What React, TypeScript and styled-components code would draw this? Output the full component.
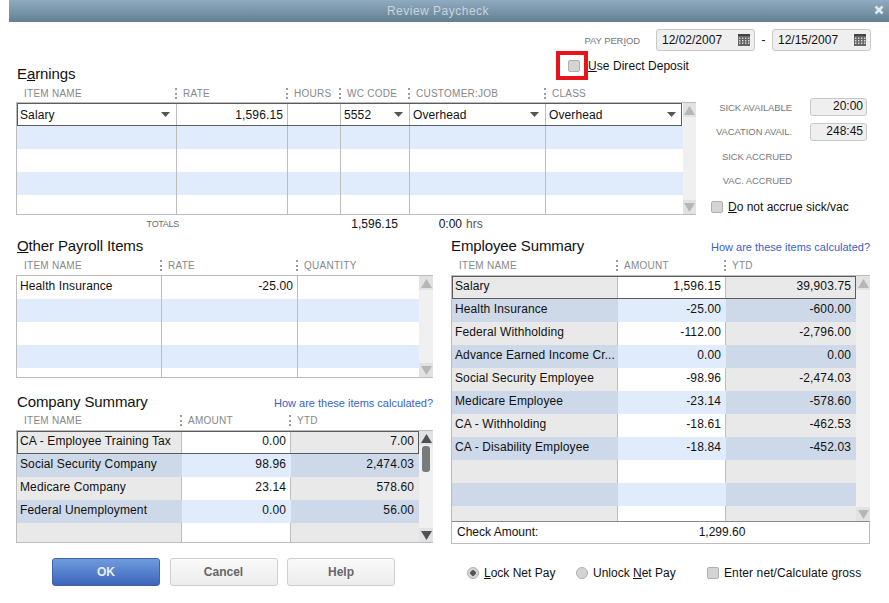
import React from "react";
import styled, { createGlobalStyle } from "styled-components";

const GlobalStyle = createGlobalStyle`
    html, body {
        margin: 0;
        padding: 0;
        background: #fff;
    }
    body {
        font-family: "Liberation Sans", Arial, sans-serif;
        font-size: 12px;
        color: #111;
    }
`;

type Align = "left" | "right";

interface Column {
    title: string;
    width: string;
    align?: Align;
    shaded?: boolean;
}

interface GridProps {
    columns: Column[];
    rows: string[][];
    activeRow?: number;
    height: number;
    dropdowns?: number[];
    thumb?: boolean;
    live?: boolean;
    lift?: boolean;
    footer?: React.ReactNode;
}

function template(columns: Column[]) {
    return columns.map((c) => c.width).join(" ");
}

function Arrow({ up, dark }: { up?: boolean; dark?: boolean }) {
    return (
        <svg width="11" height="9" viewBox="0 0 11 9">
            <path
                d={up ? "M5.5 0L11 9H0z" : "M0 0h11L5.5 9z"}
                fill={dark ? "#4c5256" : "#b4b6b8"}
            />
        </svg>
    );
}

function Caret() {
    return (
        <CaretIcon width="9" height="5" viewBox="0 0 9 5">
            <path d="M0 0h9L4.5 5z" fill="#555" />
        </CaretIcon>
    );
}

function Calendar() {
    return (
        <svg width="12" height="12" viewBox="0 0 12 12">
            <rect width="12" height="12" fill="#666" />
            <rect y="0" width="12" height="2" fill="#444" />
            {[1, 4, 7, 10].map((x) =>
                [3.5, 6, 8.5].map((y) => (
                    <rect
                        key={`${x}-${y}`}
                        x={x}
                        y={y}
                        width="1.4"
                        height="1.4"
                        fill="#ddd"
                    />
                ))
            )}
        </svg>
    );
}

function Grid({
    columns,
    rows,
    activeRow,
    height,
    dropdowns = [],
    thumb,
    live,
    lift,
    footer,
}: GridProps) {
    const tinted = columns.some((c) => c.shaded);

    return (
        <>
            <ColumnHeader $cols={template(columns)} $tall={lift}>
                {columns.map((c, i) => (
                    <HeaderCell key={c.title} $first={i === 0}>
                        {c.title}
                    </HeaderCell>
                ))}
            </ColumnHeader>
            <TableFrame>
                <TableBody $height={height}>
                    <Rows>
                        {rows.map((row, r) => (
                            <Row
                                key={r}
                                $cols={template(columns)}
                                $active={r === activeRow}
                            >
                                {columns.map((c, i) => (
                                    <Cell
                                        key={c.title}
                                        $align={c.align}
                                        $shaded={c.shaded}
                                        $stripe={r % 2 === 1}
                                        $noLine={
                                            i === columns.length - 1 ||
                                            (tinted && r % 2 === 1)
                                        }
                                        $lift={lift}
                                    >
                                        {row[i]}
                                        {r === activeRow &&
                                            dropdowns.includes(i) && <Caret />}
                                    </Cell>
                                ))}
                            </Row>
                        ))}
                    </Rows>
                    <ScrollBar>
                        <ScrollButton>
                            <Arrow up dark={live} />
                        </ScrollButton>
                        <ScrollTrack>{thumb && <ScrollThumb />}</ScrollTrack>
                        <ScrollButton>
                            <Arrow dark={live} />
                        </ScrollButton>
                    </ScrollBar>
                </TableBody>
                {footer}
            </TableFrame>
        </>
    );
}

const earnings: Column[] = [
    { title: "ITEM NAME", width: "160px" },
    { title: "RATE", width: "111px", align: "right" },
    { title: "HOURS", width: "53px", align: "right" },
    { title: "WC CODE", width: "69px" },
    { title: "CUSTOMER:JOB", width: "136px" },
    { title: "CLASS", width: "137px" },
];

const otherItems: Column[] = [
    { title: "ITEM NAME", width: "145px" },
    { title: "RATE", width: "136px", align: "right" },
    { title: "QUANTITY", width: "121px", align: "right" },
];

const companyCols: Column[] = [
    { title: "ITEM NAME", width: "165px", shaded: true },
    { title: "AMOUNT", width: "109px", align: "right" },
    { title: "YTD", width: "128px", align: "right", shaded: true },
];

const employeeCols: Column[] = [
    { title: "ITEM NAME", width: "166px", shaded: true },
    { title: "AMOUNT", width: "108px", align: "right" },
    { title: "YTD", width: "130px", align: "right", shaded: true },
];

const employeeRows = [
    ["Salary", "1,596.15", "39,903.75"],
    ["Health Insurance", "-25.00", "-600.00"],
    ["Federal Withholding", "-112.00", "-2,796.00"],
    ["Advance Earned Income Cr...", "0.00", "0.00"],
    ["Social Security Employee", "-98.96", "-2,474.03"],
    ["Medicare Employee", "-23.14", "-578.60"],
    ["CA - Withholding", "-18.61", "-462.53"],
    ["CA - Disability Employee", "-18.84", "-452.03"],
    ["", "", ""],
    ["", "", ""],
    ["", "", ""],
];

const companyRows = [
    ["CA - Employee Training Tax", "0.00", "7.00"],
    ["Social Security Company", "98.96", "2,474.03"],
    ["Medicare Company", "23.14", "578.60"],
    ["Federal Unemployment", "0.00", "56.00"],
    ["", "", ""],
];

export default function App() {
    return (
        <>
            <GlobalStyle />
            <Dialog>
                <TitleBar>
                    <TitleText>Review Paycheck</TitleText>
                    <CloseIcon width="10" height="10" viewBox="0 0 10 10">
                        <path
                            d="M1.5 1.5l7 7M8.5 1.5l-7 7"
                            stroke="#e4e9ed"
                            strokeWidth="2.6"
                        />
                    </CloseIcon>
                </TitleBar>
                <Content>
                    <PeriodRow>
                        <PeriodLabel>
                            PAY PER<u>I</u>OD
                        </PeriodLabel>
                        <DateField>
                            12/02/2007
                            <Calendar />
                        </DateField>
                        <Dash>-</Dash>
                        <DateField>
                            12/15/2007
                            <Calendar />
                        </DateField>
                    </PeriodRow>

                    <TopBlock>
                        <EarningsColumn>
                            <HeadingRow>
                                <Heading>
                                    E<u>a</u>rnings
                                </Heading>
                                <DepositOption>
                                    <RedMark>
                                        <CheckBox />
                                    </RedMark>
                                    <span>
                                        <u>U</u>se Direct Deposit
                                    </span>
                                </DepositOption>
                            </HeadingRow>
                            <Grid
                                columns={earnings}
                                height={111}
                                activeRow={0}
                                dropdowns={[0, 3, 4, 5]}
                                rows={[
                                    ["Salary", "1,596.15", "", "5552", "Overhead", "Overhead"],
                                    ["", "", "", "", "", ""],
                                    ["", "", "", "", "", ""],
                                    ["", "", "", "", "", ""],
                                    ["", "", "", "", "", ""],
                                ]}
                            />
                            <TotalsRow>
                                <TotalsLabel>TOTALS</TotalsLabel>
                                <TotalsAmount>1,596.15</TotalsAmount>
                                <TotalsHours>0:00</TotalsHours>
                                <TotalsUnit>hrs</TotalsUnit>
                            </TotalsRow>
                        </EarningsColumn>

                        <SideColumn>
                            <SideRow>
                                <SmallLabel>SICK AVAILABLE</SmallLabel>
                                <TimeField>20:00</TimeField>
                            </SideRow>
                            <SideRow>
                                <SmallLabel>VACATION AVAIL.</SmallLabel>
                                <TimeField>248:45</TimeField>
                            </SideRow>
                            <SideRow>
                                <SmallLabel>SICK ACCRUED</SmallLabel>
                            </SideRow>
                            <SideRow>
                                <SmallLabel>VAC. ACCRUED</SmallLabel>
                            </SideRow>
                            <AccrueOption>
                                <CheckBox />
                                <span>
                                    <u>D</u>o not accrue sick/vac
                                </span>
                            </AccrueOption>
                        </SideColumn>
                    </TopBlock>

                    <BottomBlock>
                        <div>
                            <SectionHead>
                                <Heading>
                                    <u>O</u>ther Payroll Items
                                </Heading>
                            </SectionHead>
                            <Grid
                                columns={otherItems}
                                height={101}
                                lift
                                rows={[
                                    ["Health Insurance", "-25.00", ""],
                                    ["", "", ""],
                                    ["", "", ""],
                                    ["", "", ""],
                                    ["", "", ""],
                                ]}
                            />
                            <CompanyHead>
                                <Heading>Company Summary</Heading>
                                <HelpLink>How are these items calculated?</HelpLink>
                            </CompanyHead>
                            <Grid
                                columns={companyCols}
                                height={111}
                                activeRow={0}
                                thumb
                                live
                                lift
                                rows={companyRows}
                            />
                        </div>
                        <div>
                            <SectionHead>
                                <EmployeeHeading>Employee Summary</EmployeeHeading>
                                <HelpLink>How are these items calculated?</HelpLink>
                            </SectionHead>
                            <Grid
                                columns={employeeCols}
                                height={245}
                                activeRow={0}
                                lift
                                rows={employeeRows}
                                footer={
                                    <CheckAmount>
                                        <span>Check Amount:</span>
                                        <CheckValue>1,299.60</CheckValue>
                                    </CheckAmount>
                                }
                            />
                        </div>
                    </BottomBlock>

                    <Footer>
                        <Buttons>
                            <ActionButton $primary>OK</ActionButton>
                            <ActionButton>Cancel</ActionButton>
                            <ActionButton>Help</ActionButton>
                        </Buttons>
                        <Options>
                            <Option $width={109}>
                                <Radio $on />
                                <span>
                                    <u>L</u>ock Net Pay
                                </span>
                            </Option>
                            <Option $width={131}>
                                <Radio />
                                <span>
                                    Unlock <u>N</u>et Pay
                                </span>
                            </Option>
                            <Option>
                                <CheckBox />
                                <GrossText>
                                    Enter net/Calculate <u>g</u>ross
                                </GrossText>
                            </Option>
                        </Options>
                    </Footer>
                </Content>
            </Dialog>
        </>
    );
}

const Dialog = styled.div`
    width: 889px;
    height: 603px;
    overflow: hidden;
    background: #fff;
`;

const TitleBar = styled.div`
    position: relative;
    height: 22px;
    margin-left: 9px;
    display: flex;
    align-items: center;
    justify-content: center;
    background: linear-gradient(#8fabc1, #64808f);
`;

const TitleText = styled.span`
    color: #c9d4dc;
    font-size: 12px;
    letter-spacing: 0.5px;
    padding-right: 22px;
`;

const CloseIcon = styled.svg`
    position: absolute;
    right: 5px;
    top: 5px;
`;

const Content = styled.div`
    padding: 7px 18px 0 16px;
`;

const PeriodRow = styled.div`
    display: flex;
    align-items: center;
    justify-content: flex-end;
    height: 22px;
`;

const SmallLabel = styled.span`
    color: #77787a;
    font-size: 9.5px;
    letter-spacing: -0.1px;
`;

const PeriodLabel = styled(SmallLabel)`
    margin-right: 16px;
`;

const DateField = styled.div`
    box-sizing: border-box;
    width: 99px;
    height: 22px;
    padding: 0 4px 0 5px;
    display: flex;
    align-items: center;
    justify-content: space-between;
    background: #efefef;
    border: 1px solid #c9c9c9;
    border-radius: 3px;
`;

const Dash = styled.span`
    width: 17px;
    text-align: center;
`;

const TopBlock = styled.div`
    display: flex;
`;

const EarningsColumn = styled.div`
    width: 680px;
`;

const HeadingRow = styled.div`
    height: 34px;
    display: flex;
    align-items: flex-end;
`;

const Heading = styled.h2`
    margin: 0 0 3px 1px;
    font-size: 15px;
    font-weight: 400;
    line-height: 17px;
    letter-spacing: -0.12px;
    color: #111;
`;

const EmployeeHeading = styled(Heading)`
    margin-left: 0;
`;

const DepositOption = styled.label`
    display: flex;
    align-items: center;
    margin-left: auto;
    margin-right: 7px;
    letter-spacing: 0.05px;
    align-self: flex-start;
    white-space: nowrap;
`;

const RedMark = styled.span`
    box-sizing: border-box;
    width: 32px;
    height: 29px;
    display: flex;
    align-items: center;
    justify-content: flex-end;
    padding-right: 4px;
    border: 4px solid #e8141c;
`;

const CheckBox = styled.span`
    box-sizing: border-box;
    display: block;
    flex: none;
    width: 12px;
    height: 12px;
    background: #d4d4d4;
    border: 1px solid #b0b0b0;
    border-radius: 2px;
`;

const ColumnHeader = styled.div<{ $cols: string; $tall?: boolean }>`
    box-sizing: border-box;
    display: grid;
    grid-template-columns: ${(p) => p.$cols};
    height: ${(p) => (p.$tall ? "18px" : "17px")};
    align-items: ${(p) => (p.$tall ? "start" : "center")};
    padding-top: ${(p) => (p.$tall ? "3px" : "0")};
`;

const HeaderCell = styled.div<{ $first?: boolean }>`
    position: relative;
    padding-left: ${(p) => (p.$first ? "8px" : "7px")};
    color: #86888a;
    font-size: 10px;
    letter-spacing: 0.25px;
    white-space: nowrap;

    &::before {
        content: "";
        display: ${(p) => (p.$first ? "none" : "block")};
        position: absolute;
        left: -1px;
        top: 0;
        height: 11px;
        border-left: 2px dotted #9a9a9a;
    }
`;

const TableFrame = styled.div`
    border: 1px solid #bcbcbc;
    border-width: 1px 0 1px 1px;
    background: #fff;
    position: relative;
`;

const TableBody = styled.div<{ $height: number }>`
    display: flex;
    height: ${(p) => p.$height}px;
    overflow: hidden;
`;

const Rows = styled.div`
    flex: 1;
    min-width: 0;
`;

const Row = styled.div<{ $cols: string; $active?: boolean }>`
    display: grid;
    grid-template-columns: ${(p) => p.$cols};
    height: 23px;
    position: relative;

    &::after {
        content: "";
        display: ${(p) => (p.$active ? "block" : "none")};
        position: absolute;
        inset: 0;
        border: 1px solid #5c5c5c;
        pointer-events: none;
    }
`;

const Cell = styled.div<{
    $align?: Align;
    $shaded?: boolean;
    $stripe?: boolean;
    $noLine?: boolean;
    $lift?: boolean;
}>`
    display: flex;
    align-items: center;
    justify-content: ${(p) => (p.$align === "right" ? "flex-end" : "space-between")};
    padding: 0 4px ${(p) => (p.$lift ? "4px" : "0")} 3px;
    white-space: nowrap;
    letter-spacing: 0.12px;
    background: ${(p) =>
        p.$shaded
            ? p.$stripe
                ? "#cdd9e8"
                : "#e9e9e9"
            : p.$stripe
              ? "#e0ecfc"
              : "#fff"};
    border-right: 1px solid ${(p) => (p.$noLine ? "transparent" : "#bdbdbd")};
`;

const CaretIcon = styled.svg`
    flex: none;
    margin-right: 2px;
`;

const ScrollBar = styled.div`
    flex: none;
    width: 14px;
    display: flex;
    flex-direction: column;
    background: #f0f0f0;
`;

const ScrollButton = styled.div`
    flex: none;
    height: 14px;
    display: flex;
    align-items: center;
    justify-content: center;
    background: #e2e2e2;
`;

const ScrollTrack = styled.div`
    flex: 1;
    padding: 0 3px;
`;

const ScrollThumb = styled.div`
    height: 26px;
    margin-top: 1px;
    background: #777b7c;
    border-radius: 3px;
`;

const TotalsRow = styled.div`
    height: 18px;
    display: flex;
    align-items: center;
`;

const TotalsLabel = styled.span`
    width: 163px;
    text-align: right;
    color: #6c6c6e;
    font-size: 9px;
    letter-spacing: -0.3px;
`;

const TotalsAmount = styled.span`
    width: 219px;
    text-align: right;
`;

const TotalsHours = styled.span`
    width: 64px;
    text-align: right;
`;

const TotalsUnit = styled.span`
    margin-left: 4px;
    color: #555;
`;

const SideColumn = styled.div`
    flex: 1;
    padding-top: 44px;
    display: flex;
    flex-direction: column;
`;

const SideRow = styled.div`
    height: 24.5px;
    display: flex;
    align-items: center;
    justify-content: flex-end;
    width: 171px;

    & > span:only-child {
        margin-right: 75px;
    }
`;

const TimeField = styled.div`
    box-sizing: border-box;
    width: 57px;
    height: 18px;
    margin-left: 18px;
    padding: 0 3px;
    line-height: 14px;
    text-align: right;
    background: #efefef;
    border: 1px solid #c9c9c9;
    border-radius: 3px;
`;

const AccrueOption = styled.label`
    display: flex;
    align-items: center;
    gap: 5px;
    margin: 7px 0 0 15px;
    white-space: nowrap;
`;

const BottomBlock = styled.div`
    display: grid;
    grid-template-columns: 417px 419px;
    gap: 18px;
    margin-top: 2px;
`;

const SectionHead = styled.div`
    height: 22px;
    display: flex;
    align-items: flex-end;
    justify-content: space-between;
`;

const HelpLink = styled.a`
    color: #3a62c8;
    font-size: 11px;
    padding-bottom: 4px;
`;

const CompanyHead = styled(SectionHead)`
    height: 34px;

    ${Heading} {
        margin-bottom: 2px;
    }

    ${HelpLink} {
        padding-bottom: 3px;
    }
`;

const CheckAmount = styled.div`
    box-sizing: border-box;
    height: 22px;
    display: flex;
    align-items: center;
    padding: 0 0 2px 5px;
    border-top: 1px solid #8a8a8a;
    border-right: 1px solid #bcbcbc;
`;

const CheckValue = styled.span`
    width: 207px;
    text-align: right;
`;

const Footer = styled.div`
    display: flex;
    align-items: center;
    margin-top: 14px;
`;

const Buttons = styled.div`
    display: flex;
    gap: 9.5px;
    margin-left: 36px;
`;

const ActionButton = styled.button<{ $primary?: boolean }>`
    width: 108px;
    height: 28px;
    font-family: inherit;
    font-size: 12px;
    font-weight: 700;
    color: ${(p) => (p.$primary ? "#e8eefa" : "#666")};
    background: ${(p) =>
        p.$primary
            ? "linear-gradient(#6f9cdc, #3d65bb)"
            : "linear-gradient(#fafafa, #ececec)"};
    border: 1px solid ${(p) => (p.$primary ? "#3f64a8" : "#cfcfcf")};
    border-radius: 3px;
`;

const Options = styled.div`
    display: flex;
    align-items: center;
    margin: 2px 0 0 72px;
`;

const Option = styled.label<{ $width?: number }>`
    display: flex;
    align-items: center;
    gap: 5px;
    width: ${(p) => (p.$width ? `${p.$width}px` : "auto")};
    white-space: nowrap;
`;

const GrossText = styled.span`
    letter-spacing: 0.1px;
`;

const Radio = styled.span<{ $on?: boolean }>`
    box-sizing: border-box;
    flex: none;
    width: 12px;
    height: 12px;
    border-radius: 50%;
    border: 1px solid #b0b0b0;
    background: ${(p) =>
        p.$on ? "radial-gradient(circle, #555 0 2.5px, #d4d4d4 3px)" : "#d4d4d4"};
`;
